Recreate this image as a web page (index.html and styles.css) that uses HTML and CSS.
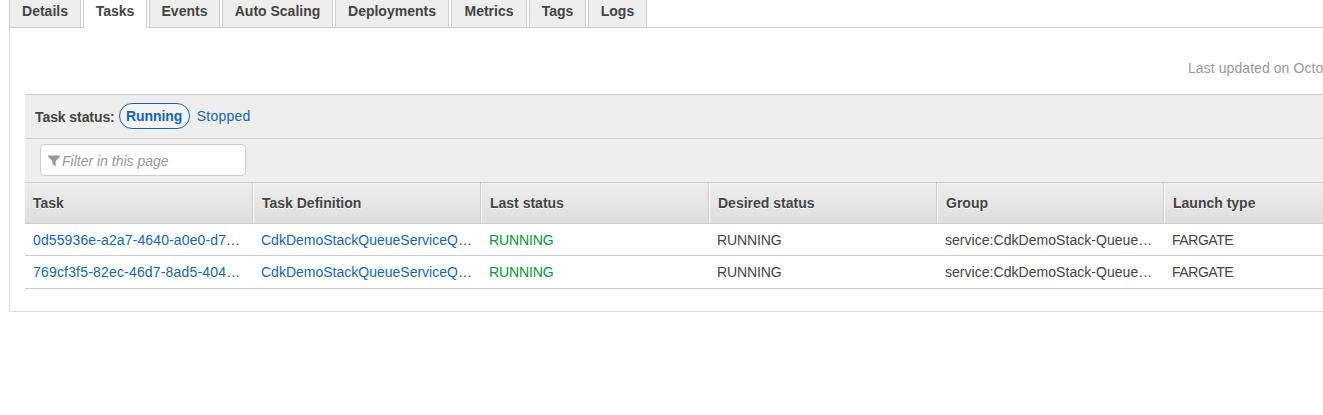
FILE: index.html
```html
<!DOCTYPE html>
<html lang="en">
<head>
<meta charset="utf-8">
<title>Tasks</title>
<link rel="stylesheet" href="styles.css">
</head>
<body>
<nav class="tabs">
<a class="tab details">Details</a>
<a class="tab active">Tasks</a>
<a class="tab events">Events</a>
<a class="tab scaling">Auto Scaling</a>
<a class="tab deployments">Deployments</a>
<a class="tab metrics">Metrics</a>
<a class="tab tags">Tags</a>
<a class="tab logs">Logs</a>
</nav>
<main class="panel">
<div class="updated">Last updated on Octo</div>
<div class="status-bar"><b>Task status:</b><a class="pill">Running</a><a class="stopped">Stopped</a></div>
<div class="filter-bar"><div class="filter">
<svg class="funnel" width="12" height="12" viewBox="0 0 12 12"><path d="M0 .5h12v1L7.7 6v5.5L4.4 9V6L0 1.5z" fill="#999"/></svg>
<span>Filter in this page</span></div></div>
<div class="row head"><div>Task</div><div>Task Definition</div><div>Last status</div><div>Desired status</div><div>Group</div><div>Launch type</div></div>
<div class="row first"><div><a class="id">0d55936e-a2a7-4640-a0e0-d7</a>…</div><div><a>CdkDemoStackQueueServiceQ</a>…</div><div class="ok">RUNNING</div><div class="state">RUNNING</div><div class="group">service:CdkDemoStack-Queue…</div><div class="launch">FARGATE</div></div>
<div class="row last"><div><a class="id wide">769cf3f5-82ec-46d7-8ad5-404</a>…</div><div><a>CdkDemoStackQueueServiceQ</a>…</div><div class="ok">RUNNING</div><div class="state">RUNNING</div><div class="group">service:CdkDemoStack-Queue…</div><div class="launch">FARGATE</div></div>
</main>
</body>
</html>
```
FILE: styles.css
```css
* { box-sizing: border-box; }
html { overflow: hidden; }
body { margin: 0; background: #fff; color: #444; font: 14px/16px "Helvetica Neue", "Liberation Sans", Arial, sans-serif; overflow: hidden; }
a { color: #1166bb; }
.tabs { display: flex; gap: 2px; height: 28px; margin-left: 9px; border-bottom: 1px solid #ccc; }
.tab { flex: none; width: 72px; height: 27px; padding-top: 3px; text-align: center; color: #444; font-weight: bold; background: #eee; border: solid #ccc; border-width: 0 1px; }
.active { width: 64px; height: 28px; background: #fff; }
.events { width: 71px; }
.scaling { width: 111px; }
.deployments { width: 114px; }
.metrics { width: 76px; }
.tags { width: 57px; }
.logs { width: 59px; }
.panel { margin-left: 9px; padding-left: 15px; height: 284px; border-left: 1px solid #ddd; border-bottom: 1px solid #ddd; }
.updated { height: 66px; padding-top: 32px; margin-left: 1163px; color: #999; white-space: nowrap; letter-spacing: .07px; }
.status-bar { display: flex; align-items: center; height: 44px; padding-left: 10px; background: #eee; border-top: 1px solid #ccc; letter-spacing: -.08px; }
.pill { width: 71px; height: 26px; margin: -2px 7px 0 4px; line-height: 24px; text-align: center; font-weight: bold; border: 1px solid #1166bb; border-radius: 13px; background: #f4f4f4; }
.stopped { margin-top: -2px; letter-spacing: .25px; }
.filter-bar { height: 44px; padding: 5px 15px; background: #eee; border-top: 1px solid #ccc; }
.filter { display: flex; align-items: center; gap: 2px; width: 206px; height: 32px; padding: 1px 0 0 7px; background: #fff; border: 1px solid #ccc; border-radius: 4px; color: #999; font-style: italic; }
.row { display: grid; grid-template-columns: 228px 228px 228px 228px 227px 1fr; height: 33px; line-height: 32px; border-bottom: 1px solid #ccc; white-space: nowrap; }
.row > div { padding-left: 8px; }
.head { height: 42px; line-height: 40px; font-weight: bold; border-top: 1px solid #ccc; background: linear-gradient(#eee, #dedede); text-shadow: 0 1px 0 #fff; }
.head > div { border-left: 1px solid #fff; box-shadow: -1px 0 #ccc; }
.head > div:first-child { border-left: 0; box-shadow: none; }
.first { height: 32px; }
.id { letter-spacing: .12px; }
.wide { letter-spacing: .18px; }
.ok, .state { letter-spacing: -.12px; }
.ok { color: #009933; }
.group { letter-spacing: .04px; }
.launch { letter-spacing: -.45px; }
```
